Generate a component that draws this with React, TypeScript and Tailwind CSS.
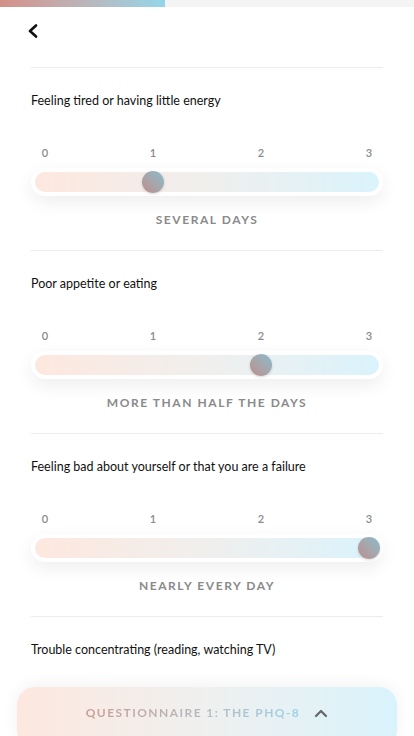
import React from 'react';

const questions = [
  { text: 'Feeling tired or having little energy', value: 1 },
  { text: 'Poor appetite or eating', value: 2 },
  { text: 'Feeling bad about yourself or that you are a failure', value: 3 },
  { text: 'Trouble concentrating (reading, watching TV)', value: null },
];

const answers = ['NOT AT ALL', 'SEVERAL DAYS', 'MORE THAN HALF THE DAYS', 'NEARLY EVERY DAY'];

const Slider = ({ value }: { value: number }) => (
  <div>
    <div className="mt-[36px] flex justify-between px-[4px] text-[11px] leading-[14px] font-semibold text-[#8a8a8a]">
      {[0, 1, 2, 3].map((n) => (
        <span key={n} className="w-[20px] text-center">
          {n}
        </span>
      ))}
    </div>
    <div className="mt-[8px] rounded-full bg-white p-[4px] shadow-[0_6px_18px_rgba(0,0,0,0.07)]">
      <div className="relative h-[20px] rounded-full bg-gradient-to-r from-[#fde8df] via-[#f0efed] to-[#daf3fc]">
        <div
          className="absolute top-[-1px] h-[22px] w-[22px] rounded-full bg-gradient-to-tr from-[#bc8e8a] to-[#86bccd] shadow-[0_1px_3px_rgba(0,0,0,0.15)]"
          style={{ left: 10 + value * 108 - 11 }}
        />
      </div>
    </div>
    <p className="mt-[16px] text-center text-[12px] leading-[16px] font-bold tracking-[0.13em] text-[#8a8a8a]">
      {answers[value]}
    </p>
  </div>
);

export default function App() {
  return (
    <div
      className="relative h-[736px] w-[414px] overflow-hidden bg-white"
      style={{ fontFamily: 'Lato, "Noto Sans", sans-serif' }}
    >
      {/* progress */}
      <div className="h-[7px] w-full bg-[#f4f4f4]">
        <div className="h-full w-[165px] bg-gradient-to-r from-[#d48f88] to-[#92d6ea]" />
      </div>

      <div className="px-[31px]">
        <div className="flex h-[48px] items-center">
          <svg width="12" height="14" viewBox="0 0 12 14" className="-ml-[4px]">
            <path d="M9 1.5 L3 7 L9 12.5" fill="none" stroke="#111" strokeWidth="2.6" strokeLinecap="round" strokeLinejoin="round" />
          </svg>
        </div>

        <div className="mt-[12px]">
          {questions.map((q, i) => (
            <div key={i} className="border-t border-[#ececec] pb-[22px]">
              <p className="mt-[24px] text-[12.5px] leading-[18px] text-[#111]">{q.text}</p>
              {q.value !== null && <Slider value={q.value} />}
            </div>
          ))}
        </div>
      </div>

      {/* bottom sheet handle */}
      <div className="absolute bottom-[-12px] left-[17px] right-[17px] h-[61px] rounded-[18px] bg-gradient-to-r from-[#fde8df] via-[#eff0ef] to-[#d9f3fc] shadow-[0_-2px_16px_rgba(0,0,0,0.06)]">
        <div className="flex h-[52px] items-center justify-center gap-[14px]">
          <span className="bg-gradient-to-r from-[#c79c96] to-[#9dd2e6] bg-clip-text text-[12px] font-bold tracking-[0.12em] text-transparent">
            QUESTIONNAIRE 1: THE PHQ-8
          </span>
          <svg width="14" height="9" viewBox="0 0 14 9">
            <path d="M2 7 L7 2 L12 7" fill="none" stroke="#666" strokeWidth="2.2" strokeLinecap="round" strokeLinejoin="round" />
          </svg>
        </div>
      </div>
    </div>
  );
}
